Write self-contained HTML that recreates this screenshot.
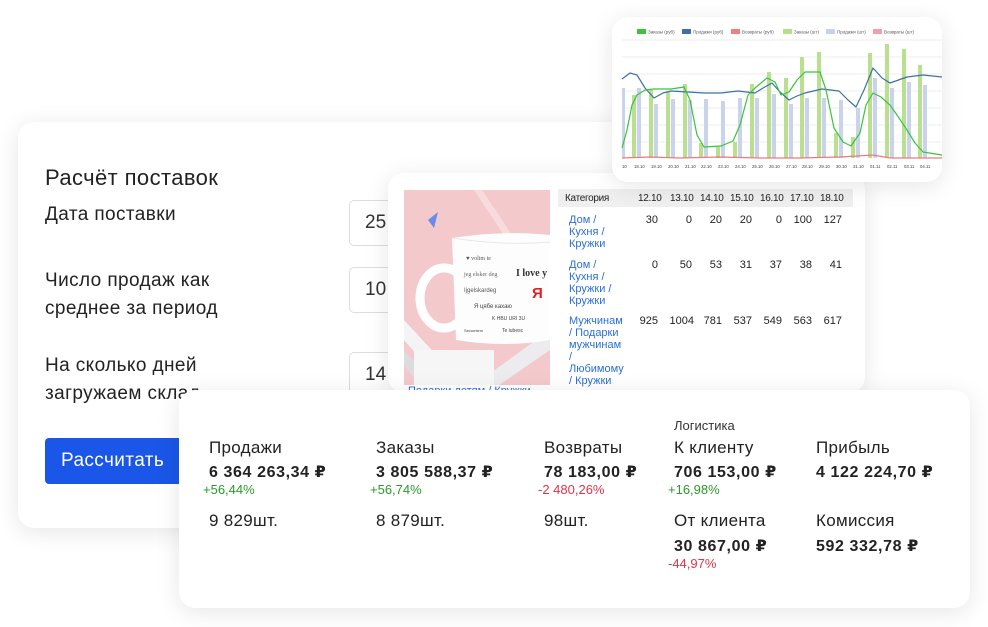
<!DOCTYPE html>
<html><head><meta charset="utf-8"><style>
*{margin:0;padding:0;box-sizing:border-box}
body{width:988px;height:627px;background:#fff;position:relative;overflow:hidden;font-family:"Liberation Sans","DejaVu Sans",sans-serif;color:#222}
.card{position:absolute;background:#fff;border-radius:16px;box-shadow:0 4px 24px rgba(0,0,0,.10)}
.a{position:absolute;white-space:nowrap}
.inp{position:absolute;border:1px solid #ddd;border-radius:5px;background:#fff;font-size:19px;color:#333;padding-left:15px;display:flex;align-items:center}
.lbl{font-size:19px;color:#222;line-height:28px;letter-spacing:.4px}
.t{font-size:10px;color:#222;letter-spacing:-.3px}
.lk{color:#2a6fd6;font-size:11px;line-height:12px}
.n{font-size:11px;text-align:right;width:30px}
.h{font-size:17px;color:#222;letter-spacing:.3px}
.v{font-size:16px;font-weight:bold;color:#222;letter-spacing:.6px}
.g{font-size:13px;color:#2a9a2a}
.r{font-size:13px;color:#e0344a}
</style></head><body>

<!-- left card -->
<div class="card" style="left:18px;top:122px;width:620px;height:406px">
 <div class="a" style="left:27px;top:43px;font-size:22px;color:#222;letter-spacing:.4px">Расчёт поставок</div>
 <div class="a lbl" style="left:27px;top:79px">Дата поставки</div>
 <div class="a lbl" style="left:27px;top:145px">Число продаж как<br>среднее за период</div>
 <div class="a lbl" style="left:27px;top:230px">На сколько дней<br>загружаем склад</div>
 <div class="inp" style="left:331px;top:78px;width:100px;height:46px">25</div>
 <div class="inp" style="left:331px;top:145px;width:100px;height:46px">10</div>
 <div class="inp" style="left:331px;top:230px;width:100px;height:46px">14</div>
 <div class="a" style="left:27px;top:316px;width:160px;height:46px;background:#1a56e8;border-radius:4px;color:#fff;font-size:19px;padding:12px 0 0 16px;letter-spacing:.4px">Рассчитать</div>
</div>

<!-- table card -->
<div class="card" style="left:388px;top:173px;width:477px;height:220px;overflow:hidden">
 <svg class="a" style="left:16px;top:17px" width="146" height="195" viewBox="0 0 146 195">
  <rect width="146" height="195" fill="#f3c9cc"/>
  <path d="M0 150 L40 195 L60 195 L0 130Z" fill="#f4f4f6"/>
  <path d="M0 175 L15 195 L30 195 L0 160Z" fill="#dcdce0"/>
  <path d="M70 195 L146 140 L146 160 L95 195Z" fill="#ececef"/>
  <path d="M70 0 L110 60 L118 60 L78 0Z" fill="#f8dcdd"/>
  <rect x="10" y="160" width="80" height="35" fill="#f6f6f6"/>
  <ellipse cx="40" cy="108" rx="24" ry="30" fill="none" stroke="#fff" stroke-width="9"/>
  <path d="M48 48 Q100 40 146 45 L146 150 Q100 158 52 150Z" fill="#fdfdfd"/>
  <path d="M48 48 Q100 56 146 52" fill="none" stroke="#e8e8e8"/>
  <text x="62" y="70" font-size="6" fill="#555" font-family="Liberation Serif">♥ volim te</text>
  <text x="60" y="86" font-size="6" fill="#666" font-family="Liberation Serif">jeg elsker deg</text>
  <text x="112" y="86" font-size="10" font-weight="bold" fill="#333" font-family="Liberation Serif">I love y</text>
  <text x="60" y="102" font-size="6" fill="#555">Ijgelskardeg</text>
  <text x="128" y="108" font-size="15" font-weight="bold" fill="#e02020">Я</text>
  <text x="70" y="118" font-size="6" fill="#444">Я цябе кахаю</text>
  <text x="88" y="130" font-size="5" fill="#444">K HBU URI 3U</text>
  <text x="60" y="142" font-size="4" fill="#444">Sevumtem</text>
  <text x="98" y="142" font-size="5" fill="#444">Te iubesc</text>
  <path d="M24 30 L34 22 L30 38Z" fill="#6a8be8"/>
 </svg>
 <div class="a lk" style="left:20px;top:212px">Подарки детям / Кружки</div>
 <div class="a" style="left:170px;top:16px;width:295px;height:18px;background:#efefef"></div>
 <div class="a t" style="left:177px;top:20px">Категория</div>
 <div class="a t" style="left:250px;top:20px">12.10</div><div class="a t" style="left:282px;top:20px">13.10</div><div class="a t" style="left:312px;top:20px">14.10</div><div class="a t" style="left:342px;top:20px">15.10</div><div class="a t" style="left:372px;top:20px">16.10</div><div class="a t" style="left:402px;top:20px">17.10</div><div class="a t" style="left:432px;top:20px">18.10</div>
 <div class="a lk" style="left:181px;top:41px">Дом /<br>Кухня /<br>Кружки</div>
 <div class="a lk" style="left:181px;top:86px">Дом /<br>Кухня /<br>Кружки /<br>Кружки</div>
 <div class="a lk" style="left:181px;top:142px">Мужчинам<br>/ Подарки<br>мужчинам<br>/<br>Любимому<br>/ Кружки</div>
 <div class="a n" style="left:240px;top:41px">30</div><div class="a n" style="left:274px;top:41px">0</div><div class="a n" style="left:304px;top:41px">20</div><div class="a n" style="left:334px;top:41px">20</div><div class="a n" style="left:364px;top:41px">0</div><div class="a n" style="left:394px;top:41px">100</div><div class="a n" style="left:424px;top:41px">127</div>
 <div class="a n" style="left:240px;top:86px">0</div><div class="a n" style="left:274px;top:86px">50</div><div class="a n" style="left:304px;top:86px">53</div><div class="a n" style="left:334px;top:86px">31</div><div class="a n" style="left:364px;top:86px">37</div><div class="a n" style="left:394px;top:86px">38</div><div class="a n" style="left:424px;top:86px">41</div>
 <div class="a n" style="left:240px;top:142px">925</div><div class="a n" style="left:276px;top:142px">1004</div><div class="a n" style="left:304px;top:142px">781</div><div class="a n" style="left:334px;top:142px">537</div><div class="a n" style="left:364px;top:142px">549</div><div class="a n" style="left:394px;top:142px">563</div><div class="a n" style="left:424px;top:142px">617</div>
</div>

<!-- chart card -->
<div class="card" style="left:612px;top:17px;width:330px;height:165px;overflow:hidden">
 <svg width="330" height="165" viewBox="612 17 330 165" style="position:absolute;left:0;top:0;font-family:'Liberation Sans',sans-serif">
  <g stroke="#eee" stroke-width="1">
   <line x1="622" y1="40" x2="942" y2="40"/><line x1="622" y1="57" x2="942" y2="57"/><line x1="622" y1="74" x2="942" y2="74"/><line x1="622" y1="91" x2="942" y2="91"/><line x1="622" y1="108" x2="942" y2="108"/><line x1="622" y1="125" x2="942" y2="125"/><line x1="622" y1="142" x2="942" y2="142"/>
  </g>
  <g font-size="4.5" fill="#555">
   <rect x="637" y="29" width="9" height="5" fill="#3cc23c"/><text x="648" y="33.5">Заказы (руб)</text>
   <rect x="682" y="29" width="9" height="5" fill="#3e70a8"/><text x="693" y="33.5">Продажи (руб)</text>
   <rect x="731" y="29" width="9" height="5" fill="#ee8080"/><text x="742" y="33.5">Возвраты (руб)</text>
   <rect x="783" y="29" width="9" height="5" fill="#b5e08a"/><text x="794" y="33.5">Заказы (шт)</text>
   <rect x="826" y="29" width="9" height="5" fill="#c8d2ec"/><text x="837" y="33.5">Продажи (шт)</text>
   <rect x="873" y="29" width="9" height="5" fill="#f0a0a6"/><text x="884" y="33.5">Возвраты (шт)</text>
  </g>
  <g fill="#b8e08e">
   <rect x="632" y="95" width="4" height="63"/><rect x="649" y="90" width="4" height="68"/><rect x="666" y="92" width="4" height="66"/><rect x="683" y="84" width="4" height="74"/><rect x="699" y="143" width="4" height="15"/><rect x="716" y="147" width="4" height="11"/><rect x="733" y="142" width="4" height="16"/><rect x="750" y="84" width="4" height="74"/><rect x="767" y="72" width="4" height="86"/><rect x="784" y="78" width="4" height="80"/><rect x="800" y="57" width="4" height="101"/><rect x="817" y="52" width="4" height="106"/><rect x="834" y="133" width="4" height="25"/><rect x="851" y="137" width="4" height="21"/><rect x="868" y="53" width="4" height="105"/><rect x="885" y="44" width="4" height="114"/><rect x="902" y="49" width="4" height="109"/><rect x="918" y="65" width="4" height="93"/>
  </g>
  <g fill="#c9d3ec">
   <rect x="622" y="88" width="3" height="70"/><rect x="637" y="88" width="4" height="70"/><rect x="654" y="104" width="4" height="54"/><rect x="671" y="99" width="4" height="59"/><rect x="688" y="100" width="4" height="58"/><rect x="704" y="99" width="4" height="59"/><rect x="721" y="101" width="4" height="57"/><rect x="738" y="98" width="4" height="60"/><rect x="755" y="98" width="4" height="60"/><rect x="772" y="94" width="4" height="64"/><rect x="789" y="104" width="4" height="54"/><rect x="805" y="98" width="4" height="60"/><rect x="822" y="98" width="4" height="60"/><rect x="839" y="100" width="4" height="58"/><rect x="856" y="108" width="4" height="50"/><rect x="873" y="78" width="4" height="80"/><rect x="890" y="88" width="4" height="70"/><rect x="907" y="82" width="4" height="76"/><rect x="923" y="85" width="4" height="73"/>
  </g>
  <polyline fill="none" stroke="#3e70a8" stroke-width="1.2" stroke-linejoin="round" points="622,79 630,73 637,75 645,88 654,98 663,93 671,91 688,92 704,93 721,93 738,91 755,93 763,88 772,83 780,92 789,100 797,96 805,93 822,89 839,91 848,100 856,107 864,90 873,68 882,78 890,83 907,77 923,75 942,77"/>
  <polyline fill="none" stroke="#3cc23c" stroke-width="1.2" stroke-linejoin="round" points="622,148 627,130 632,105 637,95 645,90 654,89 671,89 684,87 690,100 697,135 704,147 721,146 733,141 740,125 748,95 755,88 767,78 775,82 781,95 789,92 797,80 805,72 820,72 826,90 834,128 843,142 851,146 860,133 866,105 873,93 881,97 890,105 899,118 907,130 915,143 923,152 942,155"/>
  <polyline fill="none" stroke="#ee7a7a" stroke-width="1.2" points="622,158 650,157 680,158 720,157 760,158 800,158 840,157 873,155 890,158 942,158"/>
  <g font-size="4.3" fill="#444">
   <text x="622" y="168">10</text><text x="634" y="168">18.10</text><text x="651" y="168">19.10</text><text x="668" y="168">20.10</text><text x="685" y="168">21.10</text><text x="701" y="168">22.10</text><text x="718" y="168">23.10</text><text x="735" y="168">24.10</text><text x="752" y="168">25.10</text><text x="769" y="168">26.10</text><text x="786" y="168">27.10</text><text x="802" y="168">28.10</text><text x="819" y="168">29.10</text><text x="836" y="168">30.10</text><text x="853" y="168">31.10</text><text x="870" y="168">01.11</text><text x="887" y="168">02.11</text><text x="904" y="168">03.11</text><text x="920" y="168">04.11</text>
  </g>
 </svg>
</div>

<!-- bottom card -->
<div class="card" style="left:179px;top:390px;width:791px;height:218px">
 <div class="a" style="left:495px;top:28px;font-size:13px;color:#333">Логистика</div>
 <div class="a h" style="left:30px;top:48px">Продажи</div>
 <div class="a v" style="left:30px;top:72px">6 364 263,34 ₽</div>
 <div class="a g" style="left:24px;top:92px">+56,44%</div>
 <div class="a h" style="left:30px;top:121px">9 829шт.</div>
 <div class="a h" style="left:197px;top:48px">Заказы</div>
 <div class="a v" style="left:197px;top:72px">3 805 588,37 ₽</div>
 <div class="a g" style="left:191px;top:92px">+56,74%</div>
 <div class="a h" style="left:197px;top:121px">8 879шт.</div>
 <div class="a h" style="left:365px;top:48px">Возвраты</div>
 <div class="a v" style="left:365px;top:72px">78 183,00 ₽</div>
 <div class="a r" style="left:359px;top:92px">-2 480,26%</div>
 <div class="a h" style="left:365px;top:121px">98шт.</div>
 <div class="a h" style="left:495px;top:48px">К клиенту</div>
 <div class="a v" style="left:495px;top:72px">706 153,00 ₽</div>
 <div class="a g" style="left:489px;top:92px">+16,98%</div>
 <div class="a h" style="left:495px;top:121px">От клиента</div>
 <div class="a v" style="left:495px;top:146px">30 867,00 ₽</div>
 <div class="a r" style="left:489px;top:166px">-44,97%</div>
 <div class="a h" style="left:637px;top:48px">Прибыль</div>
 <div class="a v" style="left:637px;top:72px">4 122 224,70 ₽</div>
 <div class="a h" style="left:637px;top:121px">Комиссия</div>
 <div class="a v" style="left:637px;top:146px">592 332,78 ₽</div>
</div>
</body></html>
